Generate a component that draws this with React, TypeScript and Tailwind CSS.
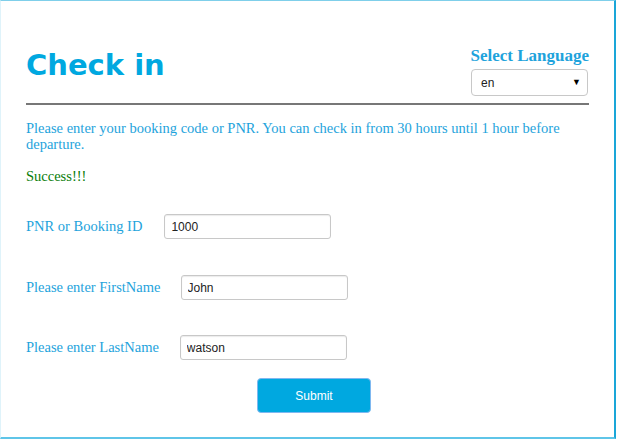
import { useState } from "react";

const serif = { fontFamily: '"Liberation Serif", "Times New Roman", serif' };

interface FieldProps {
  label: string;
  value: string;
  gap: string;
  top: string;
  onChange: (v: string) => void;
}

const Field = ({ label, value, gap, top, onChange }: FieldProps) => (
  <div className={`flex items-center h-[25px] ${top}`}>
    <label className={`text-[14.5px] text-[#1ea3dc] ${gap}`} style={serif}>
      {label}
    </label>
    <input
      className="w-[167px] h-[25px] rounded-[3px] border border-[#c8c8c8] px-[6px] text-[12px] text-[#222] outline-none shadow-[inset_0_1px_1px_rgba(0,0,0,0.08)] font-['Liberation_Sans',Arial,sans-serif]"
      value={value}
      onChange={(e) => onChange(e.target.value)}
    />
  </div>
);

const App = () => {
  const [pnr, setPnr] = useState("1000");
  const [first, setFirst] = useState("John");
  const [last, setLast] = useState("watson");

  return (
    <div className="w-[617px] h-[441px] bg-white">
      <div className="w-[616px] h-[439px] border-t border-t-[#7fcfea] border-l border-l-[#dff3fa] border-r-2 border-r-[#1aa6d8] border-b-2 border-b-[#5fc5e8] pl-[25px] pr-[25px]">
        <div className="flex justify-between items-end pt-[45px] pb-[7px] border-b-2 border-b-[#777]">
          <h1 className="text-[29px] leading-[34px] font-bold text-[#00a8e0] mb-[14px] font-['DejaVu_Sans',Verdana,sans-serif]">
            Check in
          </h1>
          <div className="flex flex-col items-end">
            <span className="text-[17px] leading-[20px] font-bold text-[#1ea3dc]" style={serif}>
              Select Language
            </span>
            <div className="relative mt-[3px] w-[117px] h-[27px] rounded-[4px] border border-[#c8c8c8] bg-white flex items-center pl-[9px] mr-[1px]">
              <span className="text-[12px] text-[#222] font-['Liberation_Sans',Arial,sans-serif]">en</span>
              <span className="absolute right-[6px] top-[5px] text-[9px] text-black">▼</span>
            </div>
          </div>
        </div>

        <p className="mt-[15px] text-[14.5px] leading-[16px] text-[#1ea3dc]" style={serif}>
          Please enter your booking code or PNR. You can check in from 30 hours until 1 hour before departure.
        </p>
        <p className="mt-[16px] text-[14.5px] leading-[16px] text-[#0a7d0a]" style={serif}>
          Success!!!
        </p>

        <div className="mt-[30px] flex flex-col">
          <Field label="PNR or Booking ID" value={pnr} gap="mr-[22px]" top="" onChange={setPnr} />
          <Field label="Please enter FirstName" value={first} gap="mr-[20px]" top="mt-[36px]" onChange={setFirst} />
          <Field label="Please enter LastName" value={last} gap="mr-[21px]" top="mt-[35px]" onChange={setLast} />
        </div>

        <div className="mt-[18px] pl-[231px]">
          <button className="w-[114px] h-[35px] rounded-[4px] bg-[#00a8e0] border border-[#7fb8f0] text-white text-[12px] font-['Liberation_Sans',Arial,sans-serif]">
            Submit
          </button>
        </div>
      </div>
    </div>
  );
};

export default App;
